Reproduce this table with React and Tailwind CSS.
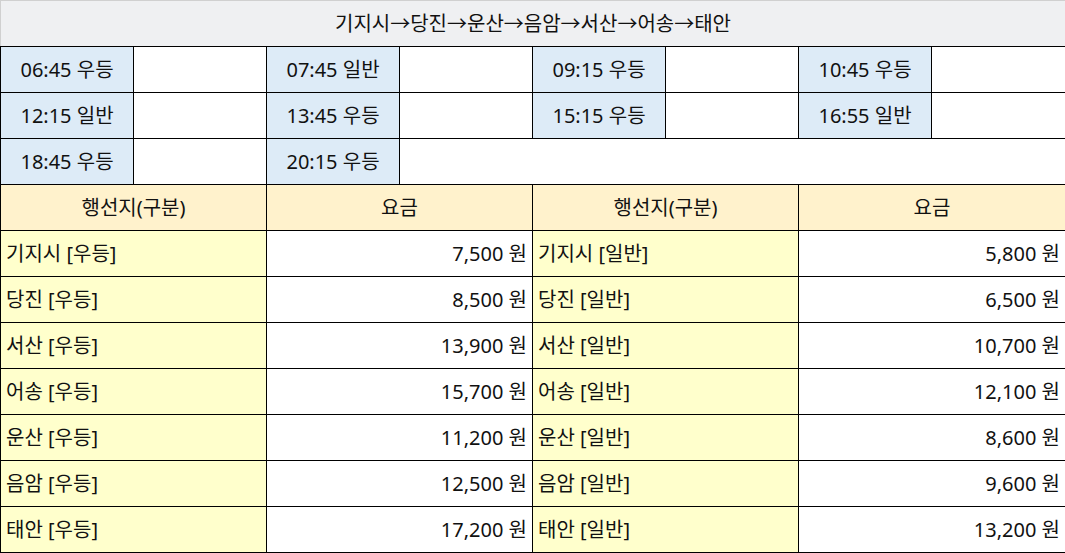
import React from "react";

const times = [
  ["06:45 우등", "07:45 일반", "09:15 우등", "10:45 우등"],
  ["12:15 일반", "13:45 우등", "15:15 우등", "16:55 일반"],
];

const fares = [
  ["기지시 [우등]", "7,500 원", "기지시 [일반]", "5,800 원"],
  ["당진 [우등]", "8,500 원", "당진 [일반]", "6,500 원"],
  ["서산 [우등]", "13,900 원", "서산 [일반]", "10,700 원"],
  ["어송 [우등]", "15,700 원", "어송 [일반]", "12,100 원"],
  ["운산 [우등]", "11,200 원", "운산 [일반]", "8,600 원"],
  ["음암 [우등]", "12,500 원", "음암 [일반]", "9,600 원"],
  ["태안 [우등]", "17,200 원", "태안 [일반]", "13,200 원"],
];

const cell = "border border-black p-0 align-middle";

export default function App() {
  return (
    <div
      className="w-[1065px] h-[553px] bg-white text-[#111] text-[20px] leading-none"
      style={{ fontFamily: '"Noto Sans", "Noto Sans CJK KR", sans-serif' }}
    >
      <table className="border-collapse table-fixed w-[1065px]">
        <colgroup>
          {Array.from({ length: 8 }).map((_, i) => (
            <col key={i} className={i === 7 ? "w-[134px]" : "w-[133px]"} />
          ))}
        </colgroup>
        <tbody>
          <tr className="h-[46px]">
            <td
              colSpan={8}
              className="border border-[#d0d0d0] border-b-black bg-[#eff0f2] text-center align-middle p-0"
            >
              기지시→당진→운산→음암→서산→어송→태안
            </td>
          </tr>
          {times.map((row, ri) => (
            <tr key={ri} className="h-[46px]">
              {row.map((t, i) => (
                <React.Fragment key={i}>
                  <td className={`${cell} bg-[#ddebf7] text-center`}>{t}</td>
                  <td className={`${cell} bg-white`}></td>
                </React.Fragment>
              ))}
            </tr>
          ))}
          <tr className="h-[46px]">
            <td className={`${cell} bg-[#ddebf7] text-center`}>18:45 우등</td>
            <td className={`${cell} bg-white`}></td>
            <td className={`${cell} bg-[#ddebf7] text-center`}>20:15 우등</td>
            <td colSpan={5} className={`${cell} bg-white`}></td>
          </tr>
          <tr className="h-[46px]">
            <td colSpan={2} className={`${cell} bg-[#fff2cc] text-center`}>행선지(구분)</td>
            <td colSpan={2} className={`${cell} bg-[#fff2cc] text-center`}>요금</td>
            <td colSpan={2} className={`${cell} bg-[#fff2cc] text-center`}>행선지(구분)</td>
            <td colSpan={2} className={`${cell} bg-[#fff2cc] text-center`}>요금</td>
          </tr>
          {fares.map((r, i) => (
            <tr key={i} className="h-[46px]">
              <td colSpan={2} className={`${cell} bg-[#ffffcc] text-left pl-[5px]`}>{r[0]}</td>
              <td colSpan={2} className={`${cell} bg-white text-right pr-[5px]`}>{r[1]}</td>
              <td colSpan={2} className={`${cell} bg-[#ffffcc] text-left pl-[5px]`}>{r[2]}</td>
              <td colSpan={2} className={`${cell} bg-white text-right pr-[5px]`}>{r[3]}</td>
            </tr>
          ))}
        </tbody>
      </table>
    </div>
  );
}
